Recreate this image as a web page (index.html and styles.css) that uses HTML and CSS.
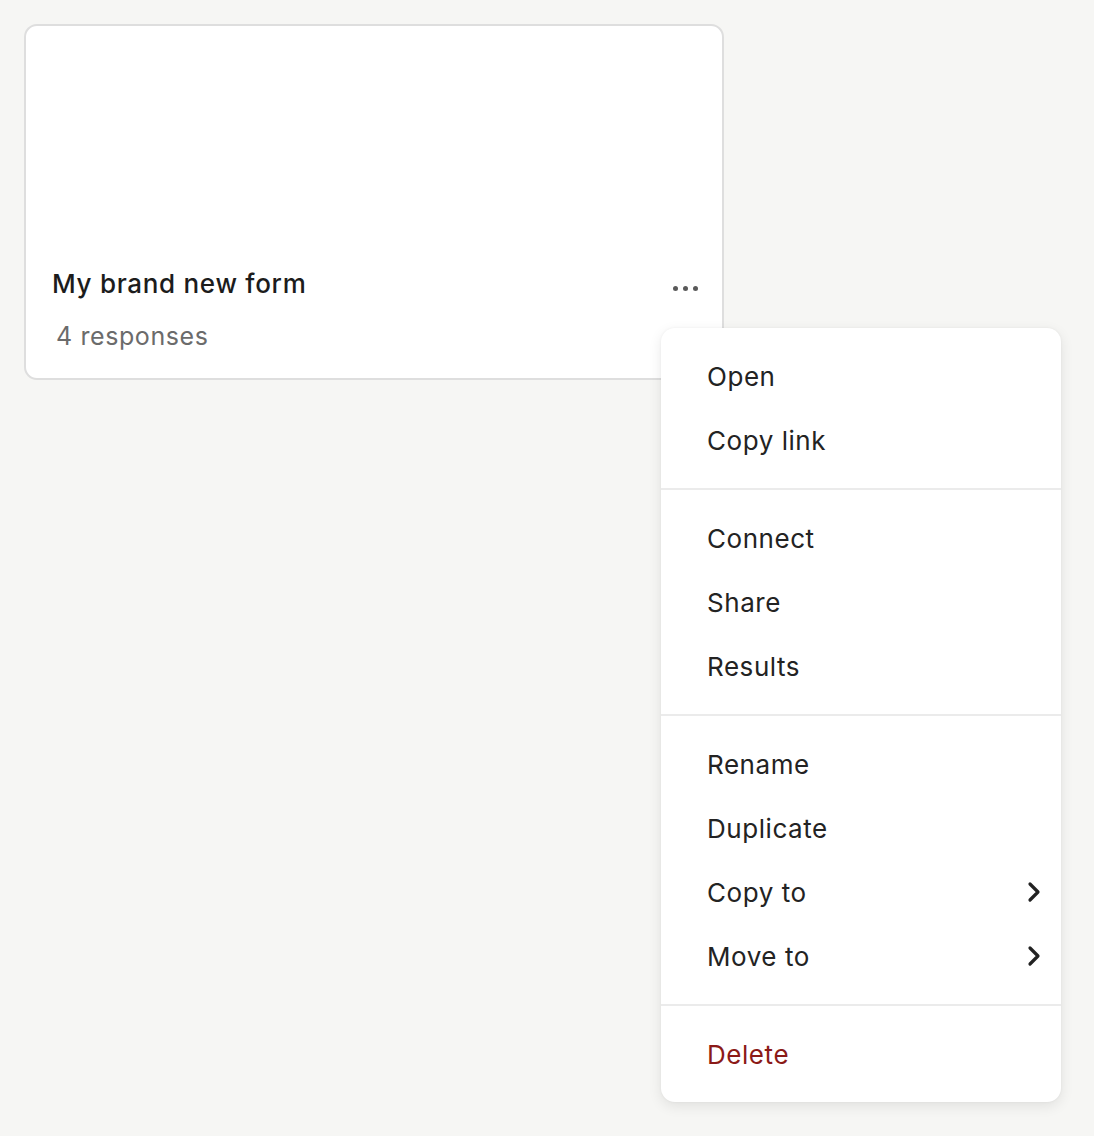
FILE: index.html
```html
<!DOCTYPE html>
<html>
<head>
<meta charset="utf-8">
<link rel="stylesheet" href="styles.css">
</head>
<body>
<div class="page">
  <div class="card">
    <div class="card-preview"></div>
    <div class="card-title-row">
      <span class="card-title">My brand new form</span>
      <span class="card-more" aria-label="More">
        <span class="dot"></span><span class="dot"></span><span class="dot"></span>
      </span>
    </div>
    <div class="card-meta">4 responses</div>
  </div>

  <div class="menu">
    <div class="menu-group">
      <div class="menu-item">Open</div>
      <div class="menu-item">Copy link</div>
    </div>
    <div class="menu-sep"></div>
    <div class="menu-group">
      <div class="menu-item">Connect</div>
      <div class="menu-item">Share</div>
      <div class="menu-item">Results</div>
    </div>
    <div class="menu-sep"></div>
    <div class="menu-group">
      <div class="menu-item">Rename</div>
      <div class="menu-item">Duplicate</div>
      <div class="menu-item">Copy to
        <svg class="chev" width="14" height="22" viewBox="0 0 14 22"><path d="M3 3 L11 11 L3 19" fill="none" stroke="#222" stroke-width="3.2" stroke-linecap="round" stroke-linejoin="round"/></svg>
      </div>
      <div class="menu-item">Move to
        <svg class="chev" width="14" height="22" viewBox="0 0 14 22"><path d="M3 3 L11 11 L3 19" fill="none" stroke="#222" stroke-width="3.2" stroke-linecap="round" stroke-linejoin="round"/></svg>
      </div>
    </div>
    <div class="menu-sep"></div>
    <div class="menu-group">
      <div class="menu-item danger">Delete</div>
    </div>
  </div>
</div>
</body>
</html>
```

FILE: styles.css
```css
html, body {
  margin: 0;
  padding: 0;
  background: #f6f6f4;
  font-family: Inter, "Noto Sans", "Liberation Sans", sans-serif;
  color: #1e1e1e;
}

.page {
  position: relative;
  width: 1094px;
  height: 1136px;
  padding: 24px;
  box-sizing: border-box;
}

.card {
  width: 700px;
  height: 356px;
  box-sizing: border-box;
  background: #fff;
  border: 2px solid #dedede;
  border-radius: 13px;
  display: flex;
  flex-direction: column;
  padding: 0 24px 26px 26px;
}

.card-preview {
  flex: 1;
}

.card-title-row {
  display: flex;
  align-items: center;
  justify-content: space-between;
  height: 32px;
}

.card-title {
  font-size: 26px;
  font-weight: 500;
  line-height: 34px;
  color: #1c1c1c;
  letter-spacing: 0.7px;
}

.card-more {
  display: flex;
  gap: 5px;
  margin-top: 8px;
}

.dot {
  width: 5px;
  height: 5px;
  border-radius: 50%;
  background: #5a5a5a;
}

.card-meta {
  margin-top: 20px;
  margin-left: 4px;
  font-size: 25px;
  line-height: 32px;
  color: #6b6b6b;
  letter-spacing: 0.6px;
}

.menu {
  position: absolute;
  left: 661px;
  top: 328px;
  width: 400px;
  background: #fff;
  border-radius: 14px;
  box-shadow: 0 4px 14px rgba(0, 0, 0, 0.09), 0 0 3px rgba(0, 0, 0, 0.05);
}

.menu-group {
  padding: 16px 0;
}

.menu-sep {
  height: 2px;
  background: #ebebeb;
}

.menu-item {
  height: 64px;
  display: flex;
  align-items: center;
  justify-content: space-between;
  padding: 0 20px 0 46px;
  font-size: 26px;
  color: #232323;
  letter-spacing: 0.55px;
}

.menu-item.danger {
  color: #8b1a17;
}

.chev {
  display: block;
}
```
